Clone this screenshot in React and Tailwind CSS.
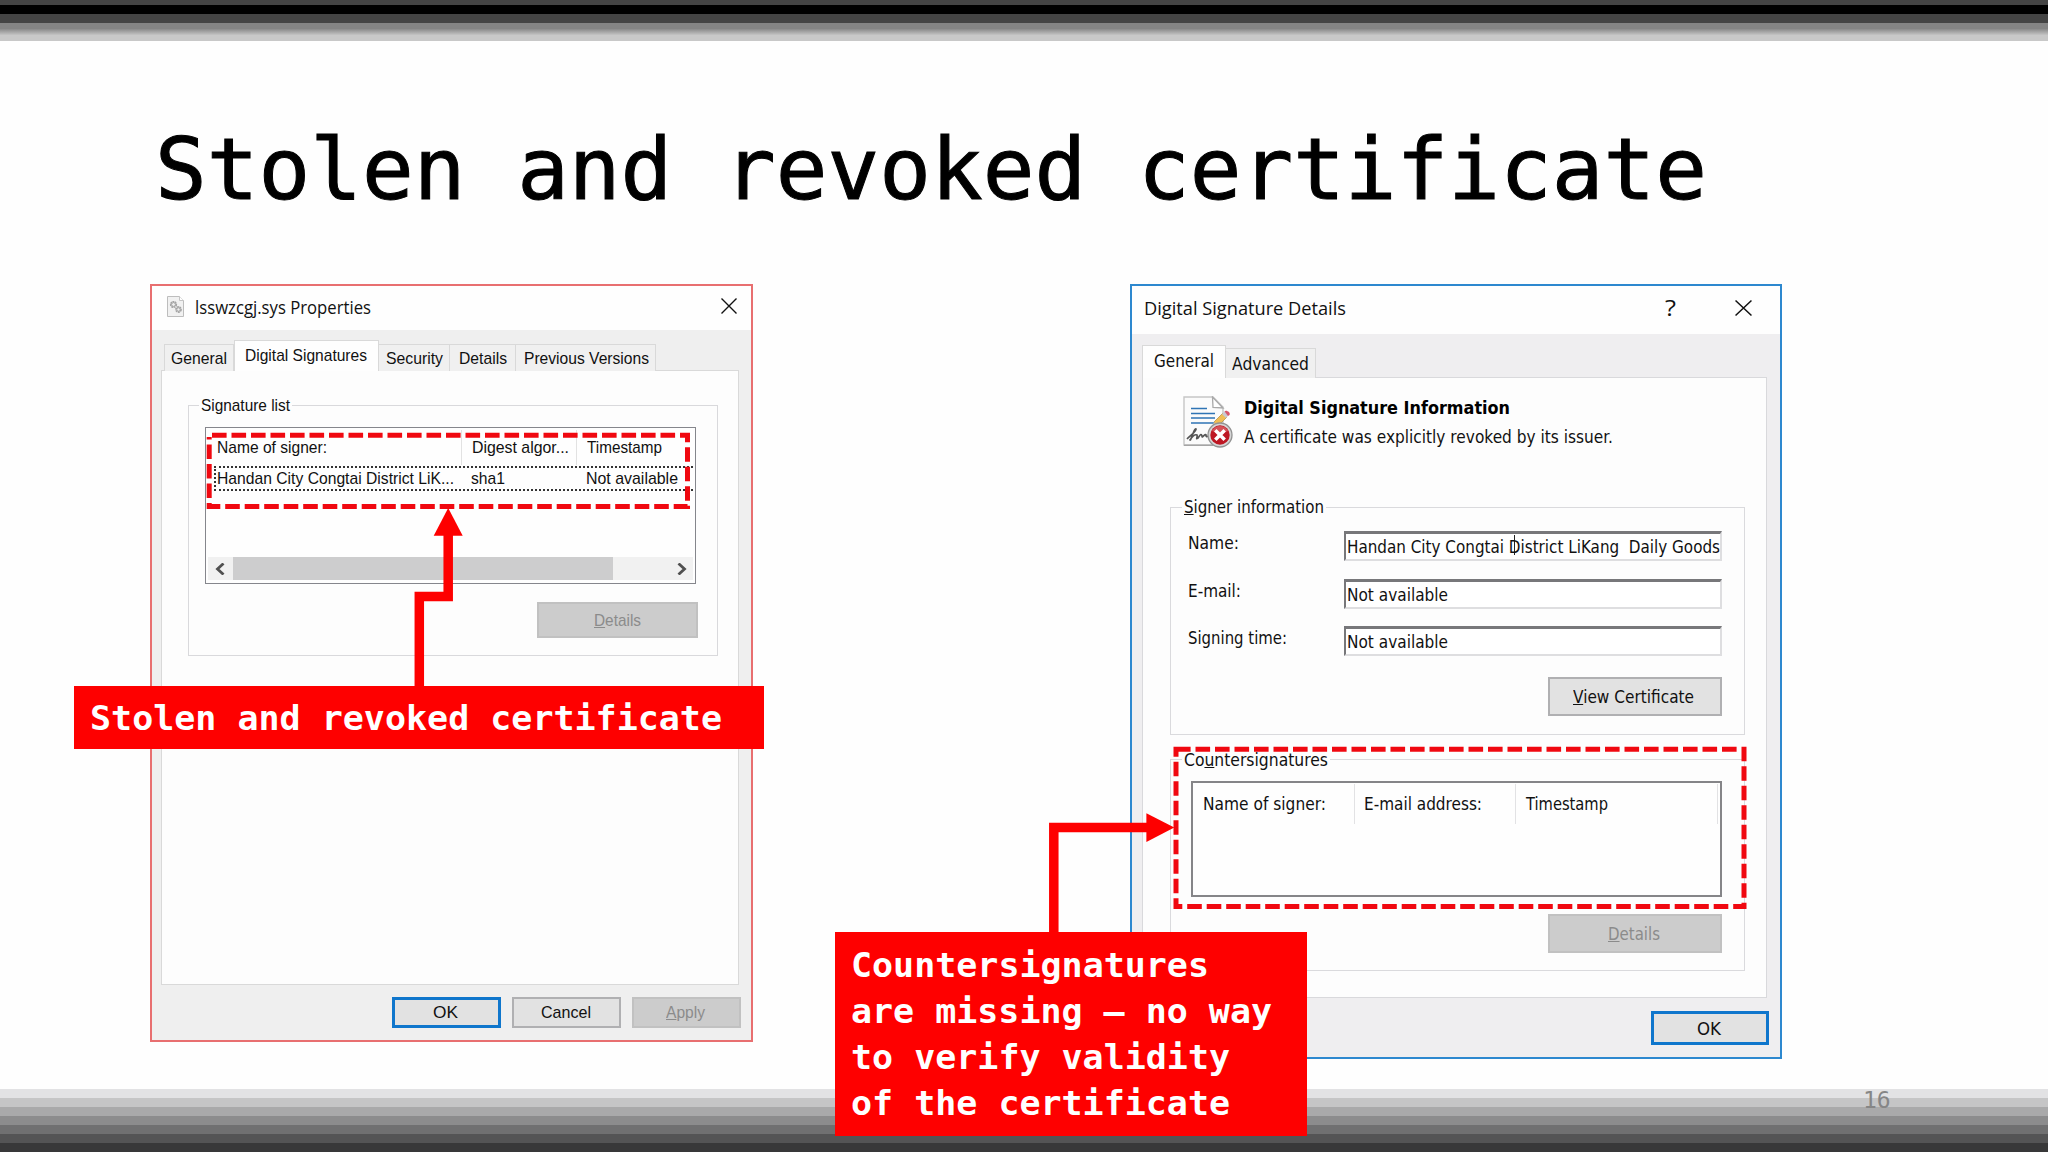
import React, { useLayoutEffect, useRef } from 'react';

// Text squeezed or stretched horizontally to the width of its box
function Fit({ className = '', children }) {
  const box = useRef(null);
  const text = useRef(null);

  useLayoutEffect(() => {
    text.current.style.transform = 'none';
    const ratio = box.current.getBoundingClientRect().width / text.current.getBoundingClientRect().width;
    text.current.style.transform = `scaleX(${ratio})`;
  }, []);

  return (
    <span ref={box} className={`block shrink-0 h-5 leading-5 ${className}`}>
      <span ref={text} className="inline-block origin-left whitespace-pre">{children}</span>
    </span>
  );
}

function CloseIcon({ className }) {
  return (
    <svg viewBox="0 0 16 16" preserveAspectRatio="none" className={className} fill="none" stroke="#111" strokeWidth="1.4">
      <path d="M0.5 0.5 L15.5 15.5 M15.5 0.5 L0.5 15.5" />
    </svg>
  );
}

function SysFileIcon() {
  return (
    <svg viewBox="0 0 17 21" className="w-[17px] h-[21px]">
      <path d="M0.5 0.5 H12.5 L16.5 4.5 V20.5 H0.5 Z" fill="#f1f1f1" stroke="#bdbdbd" />
      <path d="M12.5 0.5 V4.5 H16.5" fill="#fff" stroke="#c4c4c4" />
      <circle cx="6.5" cy="8.5" r="2.6" fill="none" stroke="#a3a3a3" strokeWidth="2" strokeDasharray="1.7 0.5" />
      <circle cx="6.5" cy="8.5" r="1.9" fill="none" stroke="#b0b0b0" />
      <circle cx="11.5" cy="13.5" r="2.4" fill="none" stroke="#a3a3a3" strokeWidth="2" strokeDasharray="1.7 0.5" />
      <circle cx="11.5" cy="13.5" r="1.7" fill="none" stroke="#b0b0b0" />
    </svg>
  );
}

function RevokedIcon() {
  return (
    <svg viewBox="0 0 50 52" className="w-[50px] h-[52px] shrink-0">
      <path d="M1 1 H30 L40 11 V49 H1 Z" fill="#fbfbfb" stroke="#c6c6c6" strokeWidth="1.4" />
      <path d="M1 49.3 H30" stroke="#a5a5a5" strokeWidth="1.4" />
      <path d="M29.5 1 L30 11.5 L40 12 Z" fill="#fff" stroke="#a9a9a9" strokeWidth="1.3" />
      <path d="M8 12.5 H24 M8 17.5 H32 M8 22 H32 M8 27 H32" stroke="#2f74b5" strokeWidth="1.5" />
      <path d="M31 26 L40 17 L44 21 L35 30 Z" fill="#f0bd55" stroke="#b58a3a" strokeWidth="0.7" />
      <path d="M31 26 L29.5 31 L35 30 Z" fill="#e7cf9c" />
      <path d="M39 18 L41.5 15.5 L45.5 19.5 L43 22 Z" fill="#c9c9d2" />
      <path d="M41.5 15.5 C43 13.5 48 16.5 46.5 19 L45 20 Z" fill="#d8566a" />
      <path d="M4 43 C8 39 14 35 13 33 C11 32 8 45 7 44 C9 41 12 38 14 39 C15 41 12 44 15 42 C17 39 18 37 19 40 C19 43 22 37 23 39 C23 43 26 38 29 40" fill="none" stroke="#555" strokeWidth="1.7" />
      <circle cx="37" cy="39" r="12" fill="#d5d5d5" stroke="#929292" strokeWidth="1.3" />
      <circle cx="37" cy="39" r="9.7" fill="#bd1723" />
      <path d="M29 35 A9 9 0 0 1 45 35 Q37 39 29 35" fill="#d55258" />
      <path d="M32.3 34.3 L41.7 43.7 M41.7 34.3 L32.3 43.7" stroke="#fff" strokeWidth="3.5" />
    </svg>
  );
}

function Tab({ active, className, children }) {
  return (
    <div
      className={`flex items-center justify-center shrink-0 border border-[#d9d9d9] border-b-0 ${
        active ? 'bg-[#fefefe] relative' : 'bg-[#f0f0f0]'
      } ${className}`}
    >
      {children}
    </div>
  );
}

function Button({ variant = 'normal', className, children }) {
  const variants = {
    normal: 'bg-[#e2e2e2] border-2 border-[#b0b0b2]',
    primary: 'bg-[#e2e2e2] border-3 border-[#0f76cc]',
    disabled: 'bg-[#cccccc] border-2 border-[#c1c1c1] text-[#8b8b8b]',
  };
  return (
    <button type="button" className={`flex items-center justify-center shrink-0 ${variants[variant]} ${className}`}>
      {children}
    </button>
  );
}

function Field({ className, children }) {
  return (
    <div className={`flex items-center w-[378px] h-[30px] pl-px bg-white border-t-3 border-l-2 border-b-2 border-r-2 border-t-[#77777a] border-l-[#77777a] border-b-[#dedee0] border-r-[#dedee0] ${className}`}>
      {children}
    </div>
  );
}

function PropertiesWindow() {
  return (
    <div className="absolute left-[150px] top-[284px] w-[603px] h-[758px] bg-[#efefef] border-2 border-[#e86f70] text-[#111] text-[17px] font-['Liberation_Sans',Arial,sans-serif]">
      <div className="flex items-center h-11 pl-[15px] pr-[14px] pb-[3px] bg-[#fefefe]">
        <SysFileIcon />
        <Fit className="w-[176px] ml-[11px] text-[17.5px] font-['Open_Sans',sans-serif]">lsswzcgj.sys Properties</Fit>
        <CloseIcon className="w-4 h-4 ml-auto -mt-px" />
      </div>

      <div className="flex items-end h-[41px] pl-3">
        <Tab className="w-[70px] h-[27px] pt-px"><Fit className="w-[56px]">General</Fit></Tab>
        <Tab active className="w-[145px] h-[31px] pr-px"><Fit className="w-[122px]">Digital Signatures</Fit></Tab>
        <Tab className="w-[71px] h-[27px] pt-px border-l-0"><Fit className="w-[57px]">Security</Fit></Tab>
        <Tab className="w-[66px] h-[27px] pt-px border-l-0"><Fit className="w-[48px]">Details</Fit></Tab>
        <Tab className="w-[140px] h-[27px] pt-px pl-[2px] border-l-0"><Fit className="w-[125px]">Previous Versions</Fit></Tab>
      </div>

      <div className="-mt-px ml-[9px] w-[578px] h-[615px] bg-[#fdfdfd] border border-[#d9d9d9] pt-6 pl-[26px]">
        <fieldset className="w-[530px] h-[261px] border border-[#d9d9dc] pl-[15px]">
          <legend className="-ml-[5px] px-[2px]"><Fit className="w-[89px] relative top-px">Signature list</Fit></legend>
          <div className="flex flex-col mt-3 ml-px w-[491px] h-[157px] border-[1.5px] border-[#85868c] bg-[#fefefe] p-[2px] pb-[3px]">
            <div className="flex h-[35px]">
              <div className="w-[254px] h-[35px] pt-[8px] pl-[9px] border-r border-[#e2e2e2]"><Fit className="w-[110px]">Name of signer:</Fit></div>
              <div className="w-[115px] h-[35px] pt-[8px] pl-[10px] border-r border-[#e2e2e2]"><Fit className="w-[97px]">Digest algor...</Fit></div>
              <div className="h-[35px] pt-[8px] pl-[10px]"><Fit className="w-[75px]">Timestamp</Fit></div>
            </div>
            <div className="flex items-center h-[25px] mt-px ml-[6px] border-2 border-r-0 border-dotted border-[#333]">
              <Fit className="w-[237px] ml-[1px]">Handan City Congtai District LiK...</Fit>
              <Fit className="w-[34px] ml-[17px]">sha1</Fit>
              <Fit className="w-[92px] ml-[81px]">Not available</Fit>
            </div>
            <div className="flex items-center h-[23px] mt-auto bg-[#f1f1f1]">
              <svg viewBox="0 0 10 12" className="w-[10px] h-3 ml-[7px]" fill="none" stroke="#505050" strokeWidth="2.8">
                <path d="M8.5 0.5 L2.5 6 L8.5 11.5" />
              </svg>
              <div className="w-[380px] h-full ml-[8px] bg-[#cdcdce]" />
              <svg viewBox="0 0 10 12" className="w-[10px] h-3 ml-auto mr-[6px]" fill="none" stroke="#505050" strokeWidth="2.8">
                <path d="M1.5 0.5 L7.5 6 L1.5 11.5" />
              </svg>
            </div>
          </div>
          <Button variant="disabled" className="w-[161px] h-9 mt-[18px] ml-[333px]">
            <Fit className="w-[47px] mt-px mr-px"><u>D</u>etails</Fit>
          </Button>
        </fieldset>
      </div>

      <div className="flex justify-end gap-[11px] mt-[12px] pr-[10px]">
        <Button variant="primary" className="w-[109px] h-[31px]"><Fit className="w-[25px] mr-[2px] mt-px">OK</Fit></Button>
        <Button className="w-[109px] h-[31px]"><Fit className="w-[50px] mr-[2px] mt-px">Cancel</Fit></Button>
        <Button variant="disabled" className="w-[109px] h-[31px]"><Fit className="w-[39px] mr-[2px] mt-px"><u>A</u>pply</Fit></Button>
      </div>
    </div>
  );
}

function DetailsWindow() {
  return (
    <div className="absolute left-[1130px] top-[284px] w-[652px] h-[775px] bg-[#efeef0] border-2 border-[#2d88cf] text-[#111] text-[17px] font-['DejaVu_Sans',Verdana,sans-serif]">
      <div className="flex items-center h-[48px] pl-[12px] pr-[28px] bg-[#fefefe]">
        <Fit className="w-[202px] -mt-[4px] text-[19px] font-['Open_Sans',sans-serif]">Digital Signature Details</Fit>
        <Fit className="w-[11px] ml-auto -mt-[4px] text-[21px] font-['Open_Sans',sans-serif]">?</Fit>
        <CloseIcon className="w-[17px] h-4 ml-[59px] -mt-[4px]" />
      </div>

      <div className="flex items-end h-[44px] pl-[10px]">
        <Tab active className="w-[84px] h-[33px] pb-[3px] pr-px"><Fit className="w-[60px]">General</Fit></Tab>
        <Tab className="w-[90px] h-[30px] pt-px border-l-0"><Fit className="w-[77px]">Advanced</Fit></Tab>
      </div>

      <div className="-mt-px ml-[10px] w-[625px] h-[621px] bg-[#fdfdfd] border border-[#d9d9dc] pt-[18px] pl-[27px]">
        <div className="flex pl-[13px] h-[101px]">
          <RevokedIcon />
          <div className="ml-[11px] pt-[2px]">
            <Fit className="w-[266px] font-bold text-[#000]">Digital Signature Information</Fit>
            <Fit className="w-[369px] mt-[9px]">A certificate was explicitly revoked by its issuer.</Fit>
          </div>
        </div>

        <fieldset className="w-[575px] h-[238px] border border-[#dadadd] pl-[13px]">
          <legend className="px-[2px] -ml-[2px]"><Fit className="w-[140px]"><u>S</u>igner information</Fit></legend>
          <div className="flex flex-col mt-[14px] pl-[4px]">
            <div className="flex h-12">
              <Fit className="w-[51px] mt-[2px]">Name:</Fit>
              <Field className="ml-[105px]">
                <Fit className="w-[373px] mt-px">Handan City Congtai District LiKang  Daily Goods</Fit>
                <div className="w-px h-5 -ml-[206px] -mt-[3px] bg-[#222]" />
              </Field>
            </div>
            <div className="flex h-[47px]">
              <Fit className="w-[53px] mt-[2px]">E-mail:</Fit>
              <Field className="ml-[103px]"><Fit className="w-[101px] mt-px">Not available</Fit></Field>
            </div>
            <div className="flex h-[51px]">
              <Fit className="w-[99px] mt-[2px]">Signing time:</Fit>
              <Field className="ml-[57px]"><Fit className="w-[101px] mt-px">Not available</Fit></Field>
            </div>
            <Button className="w-[174px] h-[39px] ml-[360px]"><Fit className="w-[121px] mr-[3px]"><u>V</u>iew Certificate</Fit></Button>
          </div>
        </fieldset>

        <fieldset className="w-[575px] h-[222px] mt-[14px] border border-[#dadadd] pl-[13px]">
          <legend className="px-[2px] -ml-[2px]"><Fit className="w-[144px] relative top-px">Co<u>u</u>ntersignatures</Fit></legend>
          <div className="flex w-[531px] h-[116px] mt-[12px] ml-[7px] pt-px border-2 border-[#858588] bg-[#fefefe]">
            <div className="w-[162px] h-10 pt-[10px] pl-[10px] border-r border-[#e2e2e4]"><Fit className="w-[123px]">Name of signer:</Fit></div>
            <div className="w-[161px] h-10 pt-[10px] pl-[9px] border-r border-[#e2e2e4]"><Fit className="w-[118px]">E-mail address:</Fit></div>
            <div className="w-[202px] h-10 pt-[10px] pl-[10px] border-r border-[#e2e2e4]"><Fit className="w-[82px]">Timestamp</Fit></div>
          </div>
          <Button variant="disabled" className="w-[174px] h-[39px] mt-[17px] ml-[364px]"><Fit className="w-[52px] mr-[2px]"><u>D</u>etails</Fit></Button>
        </fieldset>
      </div>

      <div className="flex justify-end mt-[13px] pr-[11px]">
        <Button variant="primary" className="w-[118px] h-[34px]"><Fit className="w-[24px] mr-[2px] mt-[2px]">OK</Fit></Button>
      </div>
    </div>
  );
}

// Dashed frames and connector arrows drawn over both windows
function Annotations() {
  return (
    <svg viewBox="0 0 2048 1152" className="absolute left-0 top-0 w-[2048px] h-[1152px]" fill="none">
      <g stroke="#f00810" strokeWidth="5" strokeDasharray="14.6 4.9">
        <path d="M212 435.2 H687.5 V506.5 H209.2 V437" />
        <path d="M1176 749.2 H1744 V906.5 H1176 Z" />
      </g>
      <g stroke="#fe0000" strokeWidth="9.5">
        <path d="M419.3 688 V596.4 H448.2 V534" />
        <path d="M1053.8 934 V827.5 H1148" />
      </g>
      <path d="M448.2 508 L462.7 535.7 H433.7 Z" fill="#fe0000" />
      <path d="M1174.3 827.6 L1146.4 842 V813.3 Z" fill="#fe0000" />
    </svg>
  );
}

export default function App() {
  return (
    <div className="relative flex flex-col w-[2048px] h-[1152px] overflow-hidden bg-[#fefefe] font-['DejaVu_Sans_Mono',monospace]">
      <div className="shrink-0">
        <div className="h-[5px] bg-[#444444]" />
        <div className="h-[9px] bg-black" />
        <div className="h-[9px] bg-[#444444]" />
        <div className="h-[6px] bg-[#848484]" />
        <div className="h-[6px] bg-linear-to-b from-[#8a8a8a] to-[#c4c4c4]" />
        <div className="h-[6px] bg-[#c8c8c8]" />
      </div>

      <h1 className="mt-[79px] ml-[155px] text-[85px] leading-[100px] text-black [-webkit-text-stroke:1px_black]">
        <Fit className="w-[1552px] h-[100px] leading-[100px]">Stolen and revoked certificate</Fit>
      </h1>

      <div className="mt-auto shrink-0">
        <div className="h-[9px] bg-[#e2e2e4]" />
        <div className="h-[9px] bg-[#c5c5c6]" />
        <div className="h-[9px] bg-[#a9a9aa]" />
        <div className="h-[9px] bg-[#8c8c8d]" />
        <div className="h-[9px] bg-[#707071]" />
        <div className="h-[9px] bg-[#545455]" />
        <div className="h-[9px] bg-[#383839]" />
      </div>
      <div className="absolute left-[1863px] top-[1090px] text-[23px] leading-5 text-[#868686]">16</div>

      <PropertiesWindow />
      <DetailsWindow />
      <Annotations />

      <div className="absolute left-[74px] top-[686px] w-[690px] h-[63px] pl-4 pt-[12px] bg-[#fe0000] text-white font-bold text-[34px]">
        <Fit className="w-[632px] h-10 leading-10">Stolen and revoked certificate</Fit>
      </div>
      <div className="absolute left-[835px] top-[932px] w-[472px] h-[204px] pl-4 pt-[10px] bg-[#fe0000] text-white font-bold text-[34px]">
        <Fit className="w-[358px] h-[46px] leading-[46px]">Countersignatures</Fit>
        <Fit className="w-[421px] h-[46px] leading-[46px]">are missing – no way</Fit>
        <Fit className="w-[379px] h-[46px] leading-[46px]">to verify validity</Fit>
        <Fit className="w-[379px] h-[46px] leading-[46px]">of the certificate</Fit>
      </div>
    </div>
  );
}
